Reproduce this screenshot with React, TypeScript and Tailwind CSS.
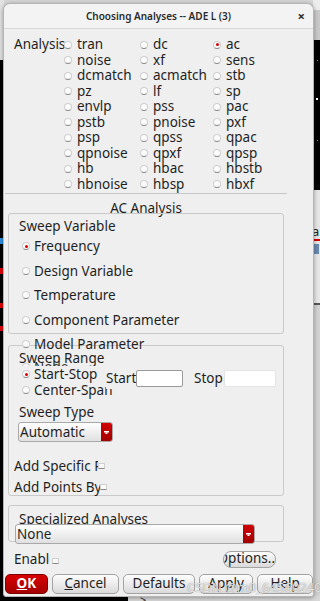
import React from "react";

const Radio = ({ on = false }: { on?: boolean }) => (
  <span className="relative inline-block w-[8px] h-[8px] shrink-0 rounded-full border border-[#cfcfcf] border-b-[#8a8a8a] bg-[#fbfbfb]">
    {on && <span className="absolute left-[1.5px] top-[1.5px] w-[3px] h-[3px] rounded-full bg-[#d40000]" />}
  </span>
);

const Check = () => (
  <span className="inline-block w-[7px] h-[6px] shrink-0 rounded-[1px] border border-[#cfcfcf] border-b-[#8a8a8a] bg-[#fafafa]" />
);

const Arrow = () => (
  <svg width="5" height="3" viewBox="0 0 5 3">
    <rect x="0" y="0" width="5" height="1.5" fill="#fff" />
    <rect x="1.5" y="1.5" width="2" height="1.5" fill="#fff" />
  </svg>
);

const Dropdown = ({ label, w }: { label: string; w: string }) => (
  <div className={"flex h-[20px] rounded-[3px] border border-[#a9a9a9] overflow-hidden bg-gradient-to-b from-[#ffffff] to-[#e0e0e0] " + w}>
    <div className="flex-1 pl-[1px] leading-[18px]">{label}</div>
    <div className="w-[11px] flex items-center justify-center bg-gradient-to-b from-[#d20000] to-[#a30000]">
      <Arrow />
    </div>
  </div>
);

const analyses = [
  ["tran", "dc", "ac"],
  ["noise", "xf", "sens"],
  ["dcmatch", "acmatch", "stb"],
  ["pz", "lf", "sp"],
  ["envlp", "pss", "pac"],
  ["pstb", "pnoise", "pxf"],
  ["psp", "qpss", "qpac"],
  ["qpnoise", "qpxf", "qpsp"],
  ["hb", "hbac", "hbstb"],
  ["hbnoise", "hbsp", "hbxf"],
];

const Btn = ({ children, w }: { children: React.ReactNode; w: string }) => (
  <div className={"h-[20px] flex items-center justify-center rounded-[5px] border border-[#a3a3a3] bg-gradient-to-b from-[#fdfdfd] to-[#dadada] leading-none " + w}>
    {children}
  </div>
);

export default function App() {
  return (
    <div className="relative w-[320px] h-[601px] overflow-hidden bg-[#d6d6d6] font-['Noto_Sans',sans-serif] text-[13.5px] text-[#1f1f1f]">
      {/* desktop behind the dialog */}
      <div className="absolute left-0 top-0 w-[4px] h-[601px] bg-black">
        <div className="h-[60px] bg-[#e2e2e2]" />
        <div className="mt-[178px] h-[6px] w-[3px] bg-[#2f8fe0]" />
        <div className="mt-[24px] h-[6px] w-[3px] bg-[#e00000]" />
        <div className="mt-[29px] h-[5px] w-[3px] bg-[#e00000]" />
        <div className="mt-[18px] h-[5px] w-[3px] bg-[#e00000]" />
      </div>
      <div className="absolute right-0 top-0 w-[7px] h-[601px] bg-[#d2d2d2] flex flex-col">
        <div className="h-[10px] bg-[#ececec]" />
        <div className="h-[30px] bg-[#c9c9c9]" />
        <div className="h-[150px] bg-black relative">
          <span className="absolute left-[3px] top-[58px] w-[2px] h-[2px] bg-white" />
          <span className="absolute left-[4px] top-[20px] w-px h-px bg-[#888]" />
          <span className="absolute left-[4px] top-[100px] w-px h-px bg-[#888]" />
        </div>
        <div className="h-[113px] bg-[#e6e6e6] flex flex-col">
          <div className="mt-[34px] text-[13px] leading-[14px] -ml-[1px]">al</div>
          <div className="h-[2px] bg-[#d00000] mt-[1px]" />
          <div className="mt-[3px] w-[6px] h-[10px] bg-[#6a88b0]" />
        </div>
        <div className="h-[2px] bg-[#555]" />
      </div>
      <div className="absolute left-0 bottom-0 w-[320px] h-[5px] flex">
        <div className="w-[128px] bg-black" />
        <div className="flex-1 bg-[#d8d8d8] text-[11px] leading-[8px] pl-[12px]">&gt;</div>
      </div>

      {/* dialog */}
      <div className="absolute left-[3px] top-[3px] w-[311px] h-[594px] rounded-t-[7px] rounded-b-[3px] border border-[#b5b5b5] bg-[#efefef] shadow-[0_1px_4px_rgba(0,0,0,0.35)] flex flex-col">
        <div className="relative h-[25px] shrink-0 flex items-center justify-center border-b border-[#d8d8d8] bg-[#f3f3f3] rounded-t-[7px] text-[10px] font-semibold text-[#2b2b2b]">
          Choosing Analyses -- ADE L (3)
          <span className="absolute right-[8px] top-[4px] text-[13px] font-bold leading-[16px]">×</span>
        </div>

        <div className="mt-[8px] flex pl-[10px]">
          <div className="w-[50px] leading-[15.5px] whitespace-nowrap">Analysis</div>
          <div className="grid grid-cols-[76px_73px_70px]">
            {analyses.map((row) =>
              row.map((a) => (
                <div key={a} className="flex items-center h-[15.5px]">
                  <Radio on={a === "ac"} />
                  <span className="ml-[5px] leading-[15.5px]">{a}</span>
                </div>
              ))
            )}
          </div>
        </div>

        <div className="ml-[1px] w-[282px] h-px bg-[#c6c6c6] mt-[1px]" />

        <div className="mt-[6px] text-center w-[284px] leading-[16px] relative z-10">
          <span className="bg-[#efefef] px-[2px]">AC Analysis</span>
        </div>
        <div className="-mt-[3px] ml-[4px] w-[276px] h-[121px] shrink-0 rounded-[3px] border border-[#c9c9c9] pl-[10px] pt-[4px] relative z-10">
          <div className="leading-[16px]">Sweep Variable</div>
          {[
            ["Frequency", true],
            ["Design Variable", false],
            ["Temperature", false],
            ["Component Parameter", false],
            ["Model Parameter", false],
          ].map(([t, on]) => (
            <div key={t as string} className="flex items-center h-[24.5px] pl-[3px]">
              <Radio on={on as boolean} />
              <span className="ml-[4px]">{t as string}</span>
            </div>
          ))}
        </div>

        <div className="mt-[11px] ml-[4px] w-[276px] h-[151px] shrink-0 rounded-[3px] border border-[#c9c9c9] pl-[10px] pt-[4px] flex flex-col">
          <div className="leading-[16px]">Sweep Range</div>
          <div className="flex">
            <div className="w-[87px] flex flex-col whitespace-nowrap">
              <div className="-mt-[7px] flex items-center h-[16px] pl-[3px] text-[#333]">
                <Radio />
                <span className="ml-[4px]">Node</span>
              </div>
              <div className="-mt-[9px] flex items-center h-[16px] pl-[3px] bg-[#efefef] relative">
                <Radio on />
                <span className="ml-[4px]">Start-Stop</span>
              </div>
              <div className="flex items-center h-[16px] pl-[3px]">
                <Radio />
                <span className="ml-[4px]">Center-Span</span>
              </div>
            </div>
            <div className="flex items-center mt-[4px] h-[17px] relative">
              <span className="w-[30px] bg-[#efefef]">Start</span>
              <div className="w-[47px] h-[17px] bg-white border border-[#9a9a9a] rounded-[2px]" />
              <span className="ml-[11px] w-[30px]">Stop</span>
              <div className="w-[52px] h-[17px] bg-white border border-[#e4e4e4] rounded-[2px]" />
            </div>
          </div>
          <div className="mt-[6px] leading-[16px]">Sweep Type</div>
          <div className="mt-[2px] -ml-[1px]">
            <Dropdown label="Automatic" w="w-[95px]" />
          </div>
          <div className="mt-[16px] -ml-[5px] flex items-center h-[16px]">
            <span className="w-[84px] overflow-hidden whitespace-nowrap">Add Specific Points</span>
            <Check />
          </div>
          <div className="mt-[5px] -ml-[5px] flex items-center h-[16px]">
            <span className="w-[86px] overflow-hidden whitespace-nowrap">Add Points By Octave</span>
            <Check />
          </div>
        </div>

        <div className="mt-[9px] ml-[4px] w-[276px] h-[37px] shrink-0 rounded-[3px] border border-[#c9c9c9] pl-[10px] pt-[5px]">
          <div className="leading-[16px]">Specialized Analyses</div>
          <div className="-mt-[3px] -ml-[4px] relative">
            <Dropdown label="None" w="w-[240px]" />
          </div>
        </div>

        <div className="mt-[8px] ml-[10px] flex items-center h-[18px]">
          <span className="w-[36px] overflow-hidden whitespace-nowrap">Enable</span>
          <span className="ml-[2px]">
            <Check />
          </span>
          <div className="ml-[164px] w-[53px] h-[17px] rounded-[8px] border border-[#a3a3a3] bg-gradient-to-b from-[#fdfdfd] to-[#dadada] overflow-hidden flex items-center justify-end">
            <span className="whitespace-nowrap leading-none">Options..</span>
          </div>
        </div>

        <div className="mt-[6px] ml-[1px] flex gap-[4px]">
          <div className="w-[43px] h-[20px] flex items-center justify-center rounded-[5px] border border-[#7d0000] bg-gradient-to-b from-[#d80000] to-[#a50000] text-white font-bold leading-none">
            <span className="underline">O</span>K
          </div>
          <Btn w="w-[68px]">
            <span className="underline">C</span>ancel
          </Btn>
          <Btn w="w-[72px]">Defaults</Btn>
          <Btn w="w-[55px]">Apply</Btn>
          <Btn w="w-[56px]">Help</Btn>
        </div>
      </div>

      <div className="absolute left-[187px] top-[579px] text-[13px] leading-[16px] text-white/75 [text-shadow:0_0_1px_#777] whitespace-nowrap">
        CSDN @m0_64560240
      </div>
    </div>
  );
}
